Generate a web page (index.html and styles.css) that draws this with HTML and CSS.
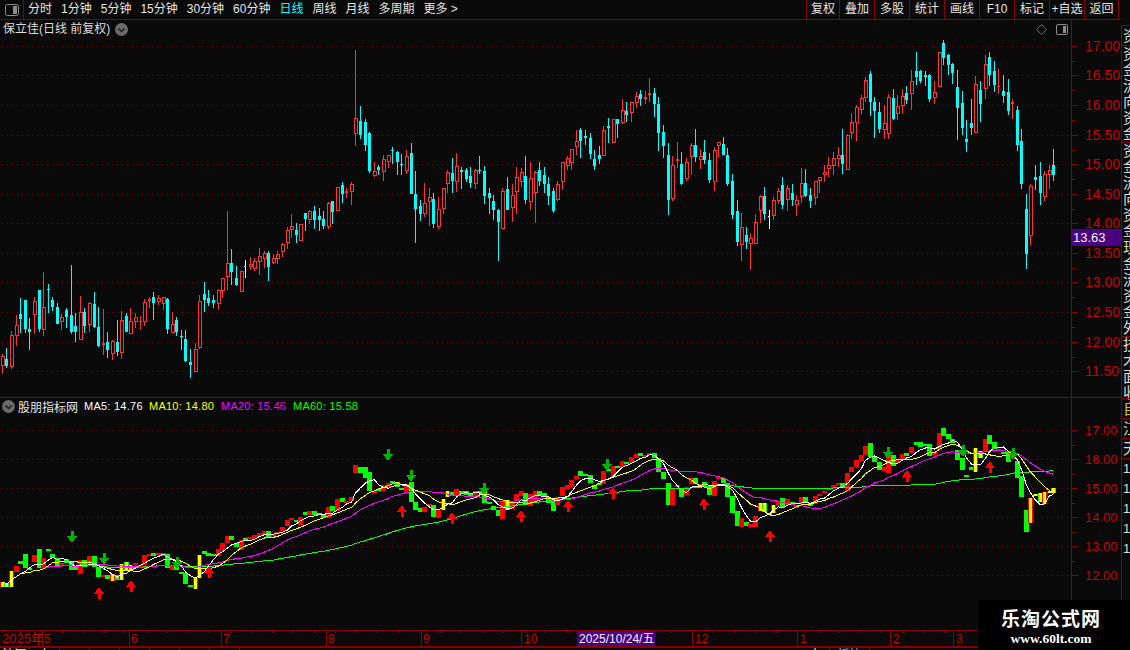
FILE: index.html
```html
<!DOCTYPE html>
<html lang="zh">
<head>
<meta charset="utf-8">
<title>保立佳 日线</title>
<link rel="stylesheet" href="styles.css">
</head>
<body>
<div class="app">
  <div class="left">
    <header class="toolbar">
      <nav class="periods">
        <span class="panel-toggle">
          <svg width="14" height="12" viewBox="0 0 14 12"><rect x="0.5" y="0.5" width="13" height="11" rx="2" class="toggle-frame"/><rect x="8" y="2" width="4" height="8" class="toggle-fill"/></svg>
        </span>
        <span class="period">分时</span>
        <span class="period">1分钟</span>
        <span class="period">5分钟</span>
        <span class="period">15分钟</span>
        <span class="period">30分钟</span>
        <span class="period">60分钟</span>
        <span class="period active">日线</span>
        <span class="period">周线</span>
        <span class="period">月线</span>
        <span class="period">多周期</span>
        <span class="period">更多 &gt;</span>
      </nav>
      <nav class="actions">
        <span class="action">复权</span>
        <span class="action">叠加</span>
        <span class="action">多股</span>
        <span class="action">统计</span>
        <span class="action">画线</span>
        <span class="action">F10</span>
        <span class="action">标记</span>
        <span class="action">+自选</span>
        <span class="action">返回</span>
      </nav>
    </header>

    <section class="pane pane-main">
      <div class="plot">
        <svg id="mainPlot" class="chart" viewBox="0 20 1071 377"></svg>
        <div class="title">
          <span>保立佳(日线 前复权)</span>
          <svg class="chev" width="13" height="13" viewBox="0 0 13 13"><circle cx="6.5" cy="6.5" r="6.5" class="chev-bg"/><path d="M3.5 5.5 L6.5 8.5 L9.5 5.5" class="chev-line"/></svg>
        </div>
        <div class="corner-icons">
          <svg width="11" height="11" viewBox="0 0 11 11"><path d="M5.5 0.5 L10.5 5.5 L5.5 10.5 L0.5 5.5 Z" class="diamond"/></svg>
          <svg width="12" height="11" viewBox="0 0 12 11"><rect x="0.5" y="0.5" width="11" height="10" rx="1.5" class="toggle-frame"/><rect x="7" y="2" width="3" height="7" class="toggle-fill"/></svg>
        </div>
      </div>
      <div class="scale">
        <svg id="mainScale" class="chart" viewBox="1071 20 50 377"></svg>
        <div class="last-price">13.63</div>
      </div>
    </section>

    <section class="pane pane-sub">
      <div class="plot">
        <svg id="subPlot" class="chart" viewBox="0 398 1071 232"></svg>
        <div class="legend">
          <svg class="chev" width="13" height="13" viewBox="0 0 13 13"><circle cx="6.5" cy="6.5" r="6.5" class="chev-bg"/><path d="M3.5 5.5 L6.5 8.5 L9.5 5.5" class="chev-line"/></svg>
          <span class="legend-name">股朋指标网</span>
          <span class="ma ma5">MA5: 14.76</span>
          <span class="ma ma10">MA10: 14.80</span>
          <span class="ma ma20">MA20: 15.46</span>
          <span class="ma ma60">MA60: 15.58</span>
        </div>
      </div>
      <div class="scale">
        <svg id="subScale" class="chart" viewBox="1071 398 50 232"></svg>
      </div>
    </section>

    <div class="axis">
      <svg id="axis" class="chart" viewBox="0 630 1121 17"></svg>
    </div>
    <footer class="tabs">
      <span class="tab">沪深</span><span class="tab">中</span><span class="tab"></span><span class="tab"></span><span class="tab"></span><span class="tab"></span><span class="tab"></span><span class="tab"></span>
      <span class="tab wide">十</span><span class="tab cyan">板块</span>
    </footer>
  </div>

  <aside class="side">
    <div class="side-main">
      <div class="side-group short">资</div>
      <div class="side-group">资金流向资金</div>
      <div class="side-group">资金流向资金</div>
      <div class="side-group">现金流资金外</div>
      <div class="side-group last">技术面收</div>
    </div>
    <div class="side-sub">
      <div class="side-group short first">自</div>
      <div class="side-group short">江</div>
      <div class="side-group short">天</div>
      <div class="side-group digits">111111111</div>
    </div>
  </aside>
</div>

<div class="watermark">
  <div class="wm-title">乐淘公式网</div>
  <div class="wm-url">www.60lt.com</div>
</div>

<script src="chart.js"></script>
</body>
</html>
```

FILE: styles.css
```css
* { box-sizing: border-box; }
html, body { margin: 0; padding: 0; height: 100%; background: #0a0a0a; overflow: hidden; }
body {
  position: relative;
  width: 1130px;
  height: 650px;
  font: 12px "Liberation Sans", "Noto Sans CJK SC", sans-serif;
  color: #e6e6e6;
}
.app { display: flex; height: 650px; }
.left { width: 1121px; display: flex; flex-direction: column; }

.toolbar {
  height: 20px;
  flex: none;
  display: flex;
  justify-content: space-between;
  border-bottom: 1px solid #8b0000;
  padding-right: 2px;
  line-height: 18px;
}
.periods { display: flex; gap: 9px; }
.panel-toggle {
  width: 24px;
  margin-right: -5px;
  display: flex;
  align-items: center;
  justify-content: center;
  border-right: 1px solid #8b0000;
}
.period { white-space: nowrap; }
.period.active { color: #00ffff; }
.actions { display: flex; }
.action {
  width: 35px;
  text-align: center;
  border-left: 1px solid #8b0000;
  white-space: nowrap;
}
.action:first-child { width: 33px; }
.action:last-child { border-right: 1px solid #8b0000; }

.toggle-frame { fill: none; stroke: #8c8c8c; }
.toggle-fill { fill: #8c8c8c; }
.diamond { fill: none; stroke: #6e6e6e; }
.chev-bg { fill: #6a6a6a; }
.chev-line { fill: none; stroke: #1c1c1c; stroke-width: 1.5; }

.pane { display: flex; flex: none; }
.pane-main { height: 378px; border-bottom: 1px solid #8b0000; }
.pane-sub { height: 232px; }
.plot { position: relative; width: 1071px; height: 100%; }
.scale { position: relative; width: 50px; height: 100%; }
.chart { display: block; width: 100%; height: 100%; shape-rendering: crispEdges; }

.title {
  position: absolute;
  left: 3px;
  top: 1px;
  display: flex;
  align-items: center;
  gap: 5px;
  line-height: 17px;
  color: #dcdcdc;
}
.corner-icons {
  position: absolute;
  right: 3px;
  top: 4px;
  display: flex;
  gap: 9px;
}
.last-price {
  position: absolute;
  left: 0;
  top: 209px;
  width: 50px;
  height: 17px;
  padding-left: 2px;
  background: #4b0082;
  border-top: 1px solid #8b0000;
  font-size: 13px;
  line-height: 16px;
  color: #f4f4f4;
}
.legend {
  position: absolute;
  left: 2px;
  top: 0;
  display: flex;
  align-items: center;
  height: 16px;
  font-size: 11px;
  white-space: nowrap;
}
.legend-name { font-size: 12px; margin-left: 3px; width: 66px; color: #e6e6e6; }
.ma { width: 72px; letter-spacing: 0.25px; }
.ma5 { width: 65px; color: #fff; }
.ma10 { color: #ffff00; }
.ma20 { color: #ff00ff; }
.ma60 { color: #00ff00; }

.axis { height: 17px; flex: none; }
.tabs { display: flex; height: 3px; flex: none; overflow: hidden; border-top: 1px solid #8b0000; line-height: 14px; }
.tab { width: 30px; border-right: 1px solid #8b0000; text-align: center; }
.tab.wide { width: 590px; text-align: right; padding-right: 8px; }
.tab.cyan { width: 40px; color: #00ffff; }

.side { width: 9px; flex: none; display: flex; flex-direction: column; overflow: hidden; }
.side-main {
  height: 373px;
  margin-top: 25px;
  display: flex;
  flex-direction: column;
  flex: none;
  border-left: 1px solid #8b0000;
  border-top: 1px solid #8b0000;
}
.side-sub { flex: 1; display: flex; flex-direction: column; border-left: 1px solid #8b0000; border-top: 1px solid #8b0000; }
.side-group {
  width: 17px;
  flex: none;
  padding-left: 1px;
  font-size: 15px;
  line-height: 16px;
  color: #dcdcdc;
  height: 97px;
  overflow: hidden;
  word-break: break-all;
  border-bottom: 1px solid #8b0000;
}
.side-group.short { height: 20px; line-height: 19px; }
.side-group.last { height: 66px; border-bottom: 0; }
.side-group.first { color: #c8c800; }
.side-group.digits { height: auto; flex: 1; font-size: 13px; line-height: 20px; border-bottom: 0; }

.watermark {
  position: absolute;
  left: 978px;
  top: 600px;
  width: 152px;
  height: 50px;
  padding-right: 6px;
  background: #000;
  text-align: center;
  font-family: "Liberation Serif", "Noto Sans CJK SC", serif;
  font-weight: 700;
  color: #fff;
}
.wm-title { font-size: 19px; line-height: 22px; margin-top: 7px; letter-spacing: 1px; font-family: "Noto Sans CJK SC", sans-serif; }
.wm-url { font-size: 13.5px; line-height: 20px; }

/* drawn chart parts */
.dot { stroke: #7a0000; stroke-width: 1; stroke-dasharray: 1 4; fill: none; }
.rule { fill: #8b0000; }
.label { fill: #c80000; font-size: 14px; font-family: "Liberation Sans", sans-serif; }
.label-sub { font-size: 13px; }
.c-r { fill: #ff3232; }
.c-c { fill: #00ffff; }
.c-w { fill: #ffffff; }
.hollow { fill: #0a0a0a; stroke: #ff3232; stroke-width: 1; }
.b-r { fill: #ff0000; }
.b-c { fill: #00ff00; }
.b-w { fill: #00ff00; }
.b-y { fill: #ffff00; }
.line { fill: none; stroke-width: 1; shape-rendering: crispEdges; }
.l5 { stroke: #ffffff; }
.l10 { stroke: #ffff00; }
.l20 { stroke: #ff00ff; }
.l60 { stroke: #00ff00; }
.up { fill: #ff0000; }
.down { fill: #00b400; }
.date-box { fill: #4b0082; }
.date-text { fill: #f4f4f4; font-size: 12px; font-family: "Liberation Sans", "Noto Sans CJK SC", sans-serif; }
.axis-text { fill: #c80000; font-size: 12px; font-family: "Liberation Sans", "Noto Sans CJK SC", sans-serif; }
.axis-year { font-size: 13px; }
```

FILE: chart.js
```js
// Candles read as: centre, high, body top, body bottom, low, colour (zoomed trace, 3 units per pixel)
var segments = [
  { ox: 0, oy: 180, d: "7 522 529 557 582 r;19 504 537 558 563 c;34 453 465 560 567 r;49 405 435 467 498 r;61 354 402 417 459 c;76 360 360 447 459 c;88 414 447 456 510 c;103 351 363 404 462 r;118 330 330 447 456 c;130 276 381 449 468 r;145 312 328 328 399 c;157 351 360 381 393 c;172 369 381 432 432 c;184 402 411 426 450 r;199 384 390 411 444 c;214 255 405 456 462 c;226 399 438 456 486 c;241 348 396 480 480 r;253 384 396 438 459 c;268 366 369 434 456 r;283 336 372 441 444 c;295 381 441 498 501 c;310 387 489 495 525 r;322 456 486 510 534 c;337 480 483 521 540 r;352 420 486 516 528 c;364 393 420 518 537 r;379 399 408 456 456 c;391 384 423 461 462 r;406 399 411 426 444 r;421 408 423 426 450 r;433 357 366 426 438 r;448 351 357 362 384 r;460 336 351 369 420 c;475 345 354 366 375 r;490 351 351 372 390 r;502 354 357 447 462 c;517 396 432 459 459 r;529 411 420 456 468 c;544 450 468 471 510 c;556 450 477 543 546 c;571 507 546 555 594 c;586 489 507 575 575 r;598 345 363 504 507 r;613 306 342 360 396 c;625 330 354 369 378 c;640 345 360 369 384 c;655 327 330 372 390 r;667 294 294 333 354 r;682 93 249 291 330 r;694 207 249 276 315 c;709 258 294 315 318 c;724 273 273 336 336 r;736 240 258 261 294 w;751 231 252 261 270 r;763 234 243 267 273 r;778 204 228 246 285 r;793 213 219 237 264 r;805 213 219 261 303 c" },
  { ox: 270, oy: 50, d: "10 612 625 640 642 r;22 603 612 628 642 r;37 579 582 605 621 r;52 531 540 578 597 r;64 492 528 540 564 r;79 519 540 555 579 c;91 522 522 573 573 r;106 489 489 507 543 c;118 480 483 510 522 r;133 468 483 510 537 c;148 474 498 510 543 c;160 483 507 528 537 c;175 456 459 531 537 r;187 453 453 486 522 c;202 411 411 483 483 r;217 396 405 432 459 c;229 414 423 429 444 r;244 396 402 426 465 r;256 0 205 252 288 r;271 168 213 255 267 c;286 207 216 285 303 c;298 246 249 363 369 c;313 336 363 378 381 r;325 345 351 360 375 c;340 315 327 366 393 r;355 315 315 336 354 r;367 291 300 303 342 c;382 303 306 336 375 c;394 312 342 345 375 c;409 300 318 363 372 r;424 279 309 432 432 c;436 363 432 477 579 c;451 450 468 492 513 c;463 399 459 492 501 r;478 414 441 456 528 r;490 429 447 522 534 c;505 441 477 531 537 r;520 414 414 477 492 r;532 360 366 402 429 r;547 324 369 393 429 c;559 309 348 396 426 r;574 351 360 366 417 c;589 354 360 387 396 c;601 351 378 399 414 c;616 357 360 402 417 r;628 318 360 363 372 c;643 348 363 438 462 c;658 414 429 444 492 c;670 435 453 480 510 c;685 477 480 516 633 c;697 414 423 537 537 r;712 381 417 480 480 c;727 402 435 474 516 r;739 351 381 426 492 r;754 354 366 396 411 r;766 318 378 450 462 c;781 336 384 456 480 r;796 363 366 429 519 r;808 336 360 393 408 c" },
  { ox: 540, oy: 75, d: "13 276 300 327 354 c;25 306 327 363 390 c;40 339 348 408 414 c;52 318 327 375 378 r;67 261 261 321 345 r;82 243 249 273 285 r;94 222 222 264 285 r;109 165 198 216 240 r;121 159 165 198 249 c;136 165 183 189 210 c;151 174 189 237 252 c;163 225 252 273 285 c;178 213 240 252 267 c;190 153 165 243 243 r;205 129 153 159 204 c;220 132 132 204 204 r;232 132 132 147 189 c;247 72 105 144 147 r;259 81 108 120 141 c;274 81 81 114 141 r;289 51 63 84 99 r;301 45 57 72 93 c;316 48 66 72 87 r;328 9 54 60 81 r;343 39 54 87 126 c;355 66 87 174 228 c;370 150 171 213 249 c;385 204 240 375 420 c;397 243 270 372 378 r;412 201 252 258 279 r;424 231 267 327 330 c;439 249 261 312 318 r;454 204 210 246 300 r;466 162 210 246 261 c;481 222 243 255 282 r;493 195 231 255 267 c;508 234 255 315 324 c;523 216 225 321 348 r;535 201 201 213 249 r;550 186 207 240 240 c;562 219 240 327 333 c;577 297 318 420 432 c;592 375 408 501 513 c;604 414 456 510 558 r;619 456 480 501 522 c;631 474 489 507 585 r;646 417 441 507 507 r;661 360 363 408 444 r;673 336 363 417 435 c;688 405 423 426 462 w;700 366 375 423 435 r;715 339 348 378 387 r;727 306 330 390 402 c;742 330 339 375 408 r;757 327 354 375 393 c;769 360 375 390 423 r;784 279 324 366 384 r;796 282 324 363 366 c" },
  { ox: 800, oy: 35, d: "31 459 480 498 519 c;46 438 438 488 510 r;58 426 426 438 474 r;73 390 411 420 441 r;85 366 390 402 426 r;100 351 369 393 420 r;115 336 360 372 396 r;127 282 360 387 417 c;142 297 300 405 405 r;154 234 261 294 312 r;169 210 216 264 318 r;184 180 189 225 237 r;196 126 135 189 201 r;211 108 117 201 243 c;223 186 201 228 309 c;238 201 231 282 294 c;253 210 264 285 312 r;265 177 186 297 312 r;280 162 189 252 255 c;292 180 213 237 255 r;307 162 183 213 234 r;319 153 174 195 207 c;334 105 138 177 225 r;349 51 108 126 150 c;361 105 108 138 144 c;376 108 120 126 153 c;388 117 120 192 201 c;403 138 171 189 207 r;418 51 51 156 156 r;430 15 24 69 90 c;445 57 60 90 120 c;457 84 87 114 147 c;472 105 156 219 315 c;487 168 204 279 300 c;499 255 312 321 351 c;514 192 264 279 300 c;526 123 147 294 294 r;541 138 165 207 261 c;556 60 87 162 192 r;568 51 66 120 153 c;583 78 108 150 171 c;595 102 153 156 177 r;610 120 168 183 204 c;625 132 171 228 240 c;637 192 201 207 252 r;652 213 225 330 348 c;664 282 318 447 462 c;679 477 522 657 702 c;691 447 453 603 633 r;706 390 426 435 465 c;721 381 423 474 510 c;733 408 417 486 498 r;748 390 405 420 462 r;760 342 390 420 438 c" }
];

var candles = [];
segments.forEach(function (s) {
  s.d.split(";").forEach(function (row) {
    var p = row.split(" ");
    candles.push({
      x: Math.floor(s.ox + p[0] / 3),
      hi: Math.round(s.oy + p[1] / 3),
      top: Math.round(s.oy + p[2] / 3),
      bot: Math.round(s.oy + p[3] / 3),
      lo: Math.round(s.oy + p[4] / 3),
      t: p[5]
    });
  });
});

var r = function (x, y, w, h, cls) {
  return '<rect x="' + x + '" y="' + y + '" width="' + w + '" height="' + h + '" class="' + cls + '"/>';
};
var hdots = function (y, x2) {
  return '<line x1="2" x2="' + x2 + '" y1="' + (y + 0.5) + '" y2="' + (y + 0.5) + '" class="dot"/>';
};
var text = function (x, y, s, cls) {
  return '<text x="' + x + '" y="' + y + '" class="' + cls + '">' + s + "</text>";
};

/* ---------- main pane ---------- */
var mainLevels = [["17.00",46],["16.50",75],["16.00",105],["15.50",135],["15.00",164],["14.50",194],["14.00",223],["13.50",253],["13.00",282],["12.50",312],["12.00",342],["11.50",371]];
var out = "";
mainLevels.forEach(function (l) { out += hdots(l[1], 1068); });
candles.forEach(function (c) {
  var colour = "c-" + c.t;
  var h = Math.max(c.bot - c.top, 1);
  out += r(c.x, c.hi, 1, Math.max(c.lo - c.hi, 1), colour);
  if (c.t === "r" && h > 2) {
    out += '<rect x="' + (c.x - 0.5) + '" y="' + (c.top + 0.5) + '" width="3" height="' + (h - 1) + '" class="hollow"/>';
  } else if (c.t === "w") {
    out += r(c.x - 1, c.top, 2, 1, colour);
  } else {
    out += r(c.x - 1, c.top, 3, h, colour);
  }
});
document.getElementById("mainPlot").innerHTML = out;

var scale = function (levels, longLen) {
  var s = r(1071, 0, 1, 700, "rule");
  levels.forEach(function (l, i) {
    s += r(1071, l[1], longLen, 1, "rule");
    if (i < levels.length - 1) {
      s += r(1071, Math.round((l[1] + levels[i + 1][1]) / 2), 4, 1, "rule");
    }
  });
  return s;
};
out = scale(mainLevels, 7);
mainLevels.forEach(function (l) { out += text(1085, l[1] + 5, l[0], "label"); });
document.getElementById("mainScale").innerHTML = out;

/* ---------- indicator pane: same candles on a 29px-per-unit scale ---------- */
var subLevels = [["17.00",430],["16.00",459],["15.00",488],["14.00",517],["13.00",546],["12.00",575]];
var toSub = function (y) { return 430 + (y - 46.5) * 0.49; };
var yellow = [[0,13],[110,115],[120,132],[194,202],[440,447],[503,508],[757,776],[973,984],[1028,1056]];
var isYellow = function (x) {
  return yellow.some(function (b) { return x >= b[0] && x <= b[1]; });
};

out = "";
subLevels.forEach(function (l) { out += hdots(l[1], 1068); });
candles.forEach(function (c) {
  var t = Math.round(toSub(c.top));
  var h = Math.max(Math.round(toSub(c.bot)) - t, 2);
  out += r(c.x - 2, t, 5, h, "b-" + c.t);
  if (isYellow(c.x)) { out += r(c.x - 1, t, 3, h, "b-y"); }
});

var ma = function (n, cls) {
  var pts = candles.map(function (c, i) {
    var sum = 0, k = 0;
    for (var j = Math.max(0, i - n + 1); j <= i; j++) {
      var d = candles[j];
      sum += d.t === "r" ? d.top : d.t === "c" ? d.bot : (d.top + d.bot) / 2;
      k++;
    }
    return c.x + 0.5 + "," + toSub(sum / k).toFixed(1);
  });
  return '<polyline points="' + pts.join(" ") + '" class="line ' + cls + '"/>';
};
out += ma(60, "l60") + ma(20, "l20") + ma(10, "l10") + ma(5, "l5");

var arrow = function (x, y, up) {
  var s = 1.5;
  if (up) {
    return '<polygon points="' + x + "," + y + " " + (x + 5) + "," + (y + 7) + " " + (x + s) + "," + (y + 7) + " " + (x + s) + "," + (y + 12) + " " + (x - s) + "," + (y + 12) + " " + (x - s) + "," + (y + 7) + " " + (x - 5) + "," + (y + 7) + '" class="up"/>';
  }
  return '<polygon points="' + x + "," + (y + 12) + " " + (x + 5) + "," + (y + 5) + " " + (x + s) + "," + (y + 5) + " " + (x + s) + "," + y + " " + (x - s) + "," + y + " " + (x - s) + "," + (y + 5) + " " + (x - 5) + "," + (y + 5) + '" class="down"/>';
};
[[99,587],[131,580],[209,566],[402,505],[452,512],[521,510],[568,500],[613,487],[704,498],[770,530],[907,470],[990,461]].forEach(function (a) {
  out += arrow(a[0], a[1], true);
});
[[72,531],[104,553],[177,557],[388,449],[411,470],[484,483],[607,459],[888,447],[963,445],[1013,448]].forEach(function (a) {
  out += arrow(a[0], a[1], false);
});
document.getElementById("subPlot").innerHTML = out;

out = scale(subLevels, 7);
subLevels.forEach(function (l) { out += text(1085, l[1] + 5, l[0], "label label-sub"); });
document.getElementById("subScale").innerHTML = out;

/* ---------- time axis ---------- */
out = r(0, 630, 1121, 1, "rule") + r(0, 646, 1121, 1, "rule") + r(1071, 630, 1, 17, "rule");
[42,129,221,326,421,521,692,797,890,953].forEach(function (x) { out += r(x, 630, 1, 17, "rule"); });
for (var tx = 20; tx < 1070; tx += 21) { out += r(tx, 631, 1, 2, "rule"); }
[["2025年",2,"axis-text axis-year"],["5",44,"axis-text"],["6",131,"axis-text"],["7",223,"axis-text"],["8",328,"axis-text"],["9",423,"axis-text"],["10",524,"axis-text"],["12",695,"axis-text"],["1",800,"axis-text"],["2",893,"axis-text"],["3",956,"axis-text"]].forEach(function (a) {
  out += text(a[1], 643, a[0], a[2]);
});
out += r(577, 631, 78, 15, "date-box");
out += text(579, 643, "2025/10/24/五", "date-text");
document.getElementById("axis").innerHTML = out;
```
